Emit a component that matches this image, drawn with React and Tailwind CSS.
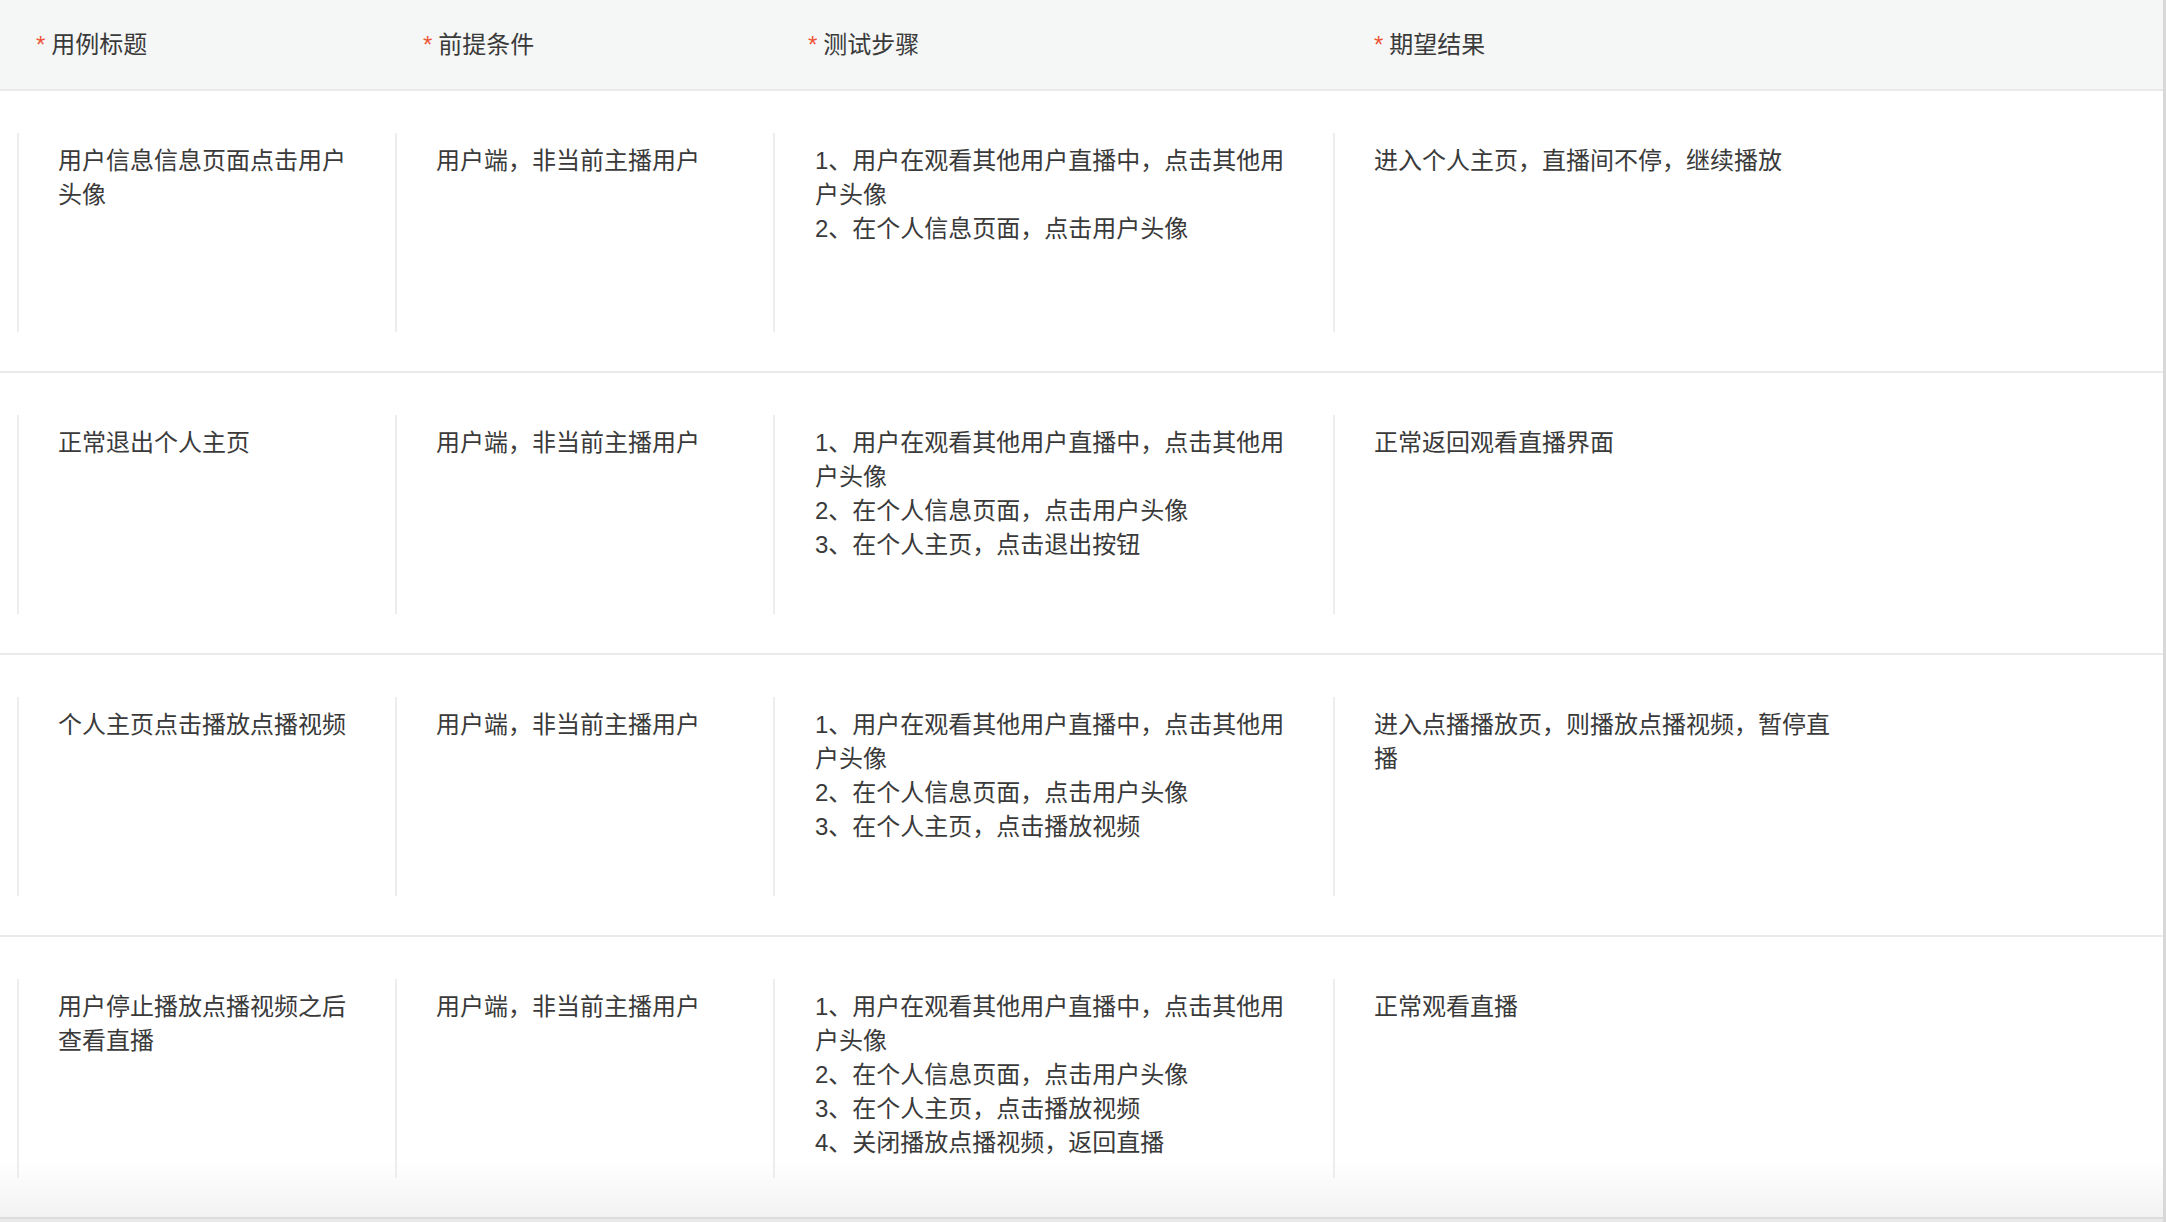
const columns = ["用例标题", "前提条件", "测试步骤", "期望结果"];

const cases = [
  {
    title: "用户信息信息页面点击用户头像",
    pre: "用户端，非当前主播用户",
    steps: ["1、用户在观看其他用户直播中，点击其他用户头像", "2、在个人信息页面，点击用户头像"],
    expect: "进入个人主页，直播间不停，继续播放",
  },
  {
    title: "正常退出个人主页",
    pre: "用户端，非当前主播用户",
    steps: [
      "1、用户在观看其他用户直播中，点击其他用户头像",
      "2、在个人信息页面，点击用户头像",
      "3、在个人主页，点击退出按钮",
    ],
    expect: "正常返回观看直播界面",
  },
  {
    title: "个人主页点击播放点播视频",
    pre: "用户端，非当前主播用户",
    steps: [
      "1、用户在观看其他用户直播中，点击其他用户头像",
      "2、在个人信息页面，点击用户头像",
      "3、在个人主页，点击播放视频",
    ],
    expect: "进入点播播放页，则播放点播视频，暂停直播",
  },
  {
    title: "用户停止播放点播视频之后查看直播",
    pre: "用户端，非当前主播用户",
    steps: [
      "1、用户在观看其他用户直播中，点击其他用户头像",
      "2、在个人信息页面，点击用户头像",
      "3、在个人主页，点击播放视频",
      "4、关闭播放点播视频，返回直播",
    ],
    expect: "正常观看直播",
  },
];

const headerWidths = ["w-[423px] pl-[36px]", "w-[385px]", "w-[566px]", "flex-1"];

function HeaderCell({ label, className }) {
  return (
    <div className={`flex items-center ${className}`}>
      <span className="mr-[6px] text-[24px] leading-none text-[#ee5538]">*</span>
      <span>{label}</span>
    </div>
  );
}

function CaseRow({ item, last }) {
  return (
    <div
      className={
        last
          ? "flex h-[282px] border-b-2 border-[#dcdcdc] bg-[linear-gradient(to_bottom,#ffffff_0%,#ffffff_80%,#f2f2f2_100%)] pb-[39px] pl-[17px] pt-[42px]"
          : "flex h-[282px] border-b-2 border-[#ebebeb] pb-[39px] pl-[17px] pt-[42px]"
      }
    >
      <div className="w-[378px] border-l-2 border-[#ededed] pl-[39px] pr-[37px] pt-[11px]">
        {item.title}
      </div>
      <div className="w-[378px] border-l-2 border-[#ededed] pl-[39px] pr-[37px] pt-[11px]">
        {item.pre}
      </div>
      <div className="w-[560px] border-l-2 border-[#ededed] pl-[40px] pr-[38px] pt-[11px]">
        {item.steps.map((step) => (
          <div key={step}>{step}</div>
        ))}
      </div>
      <div className="w-[551px] border-l-2 border-[#ededed] pl-[39px] pr-[40px] pt-[11px]">
        {item.expect}
      </div>
    </div>
  );
}

export default function App() {
  return (
    <div className="flex h-[1222px] w-full overflow-hidden bg-white font-['Liberation_Sans','Noto_Sans_CJK_SC',sans-serif] text-[24px] leading-[34px] text-[#3a3a3a]">
      <div className="flex flex-1 flex-col border-r-[3px] border-[#d8d8d8]">
        <div className="flex h-[91px] shrink-0 border-b-2 border-[#e9e9e9] bg-[#f5f6f6]">
          {columns.map((label, i) => (
            <HeaderCell key={label} label={label} className={headerWidths[i]} />
          ))}
        </div>
        {cases.map((item, i) => (
          <CaseRow key={item.title} item={item} last={i === cases.length - 1} />
        ))}
        <div className="flex-1 bg-[#e9e9e9]" />
      </div>
    </div>
  );
}
